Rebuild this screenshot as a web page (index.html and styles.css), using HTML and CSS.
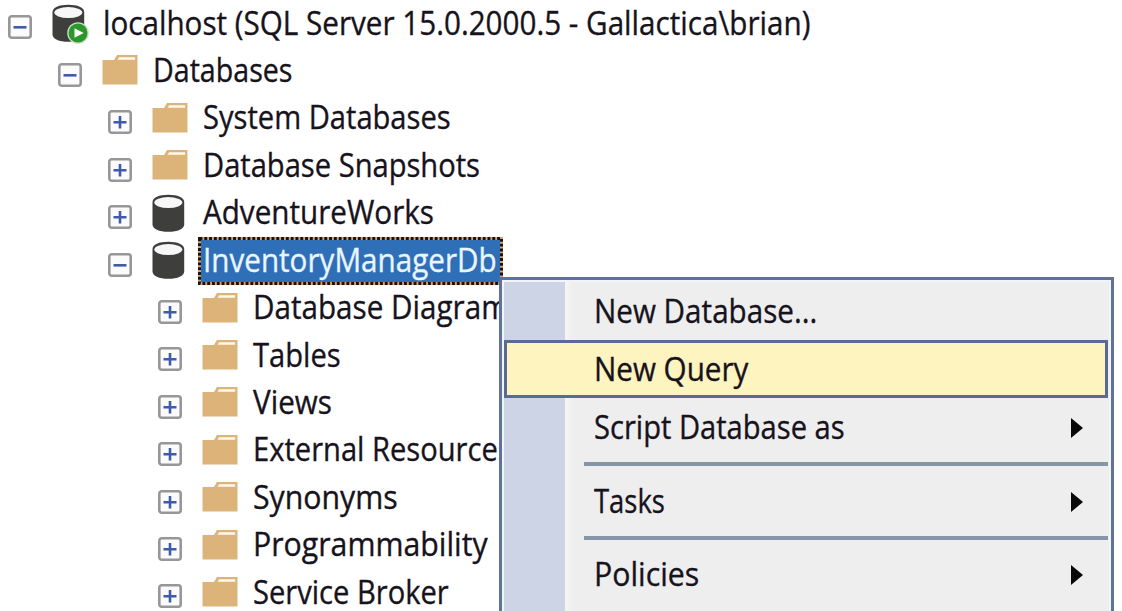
FILE: index.html
```html
<!DOCTYPE html>
<html lang="en">
<head>
<meta charset="utf-8">
<title>Object Explorer</title>
<link rel="stylesheet" href="styles.css">
</head>
<body>
<svg class="defs" aria-hidden="true">
  <symbol id="minus" viewBox="0 0 24 24"><rect x="1.3" y="1.3" width="21.4" height="21.4" rx="2.5" fill="#fbfbfb" stroke="#979797" stroke-width="2.6"/><path d="M5.5 12.3h13" stroke="#3f5ba9" stroke-width="2.6"/></symbol>
  <symbol id="plus" viewBox="0 0 24 24"><rect x="1.3" y="1.3" width="21.4" height="21.4" rx="2.5" fill="#fbfbfb" stroke="#979797" stroke-width="2.6"/><path d="M5.5 12.3h13M12 6v12.6" stroke="#3f5ba9" stroke-width="2.6"/></symbol>
  <symbol id="folder" viewBox="0 0 36 48"><path d="M.5 13h11.5L15 8h20.5v29.5H.5z" fill="#dcb378"/><path d="M15.5 12.8l1.6-2.5h16v2.5z" fill="#fff8ec"/></symbol>
  <symbol id="db" viewBox="0 0 36 48"><path d="M.5 12C.5 7.500 7 4.700 16.300 4.700S32.200 7.500 32.200 12v22.500c0 4.500-6.500 7.300-15.900 7.300S.5 39 .5 34.500z" fill="#3e3e3c"/><ellipse cx="16.300" cy="12.600" rx="14" ry="5.500" fill="#f7f7f7"/></symbol>
</svg>
<main class="explorer">
  <div class="row l0"><svg class="toggle"><use href="#minus"/></svg><span class="icon"><svg class="glyph"><use href="#db"/></svg><svg class="badge" viewBox="0 0 22 22"><circle cx="11" cy="11" r="10.800" fill="#c9dcc6"/><circle cx="11" cy="11" r="9.500" fill="#2b982b"/><path d="M7.500 6.300l9.200 4.700-9.200 4.700z" fill="#fff"/></svg></span><span class="label wide">localhost (SQL Server 15.0.2000.5 - Gallactica\brian)</span></div>
  <div class="row l1"><svg class="toggle"><use href="#minus"/></svg><svg class="icon"><use href="#folder"/></svg><span class="label narrow">Databases</span></div>
  <div class="row l2"><svg class="toggle"><use href="#plus"/></svg><svg class="icon"><use href="#folder"/></svg><span class="label">System Databases</span></div>
  <div class="row l2"><svg class="toggle"><use href="#plus"/></svg><svg class="icon"><use href="#folder"/></svg><span class="label">Database Snapshots</span></div>
  <div class="row l2"><svg class="toggle"><use href="#plus"/></svg><svg class="icon"><use href="#db"/></svg><span class="label wide">AdventureWorks</span></div>
  <div class="row l2"><svg class="toggle"><use href="#minus"/></svg><svg class="icon"><use href="#db"/></svg><span class="selection"><svg class="focus"><rect class="ring" x="1.500" y="1.500" width="302" height="45"/><rect class="dots" x="1.500" y="1.500" width="302" height="45"/></svg><span class="label wide">InventoryManagerDb</span></span></div>
  <div class="row l3"><svg class="toggle"><use href="#plus"/></svg><svg class="icon"><use href="#folder"/></svg><span class="label wide">Database Diagrams</span></div>
  <div class="row l3"><svg class="toggle"><use href="#plus"/></svg><svg class="icon"><use href="#folder"/></svg><span class="label">Tables</span></div>
  <div class="row l3"><svg class="toggle"><use href="#plus"/></svg><svg class="icon"><use href="#folder"/></svg><span class="label wide">Views</span></div>
  <div class="row l3"><svg class="toggle"><use href="#plus"/></svg><svg class="icon"><use href="#folder"/></svg><span class="label">External Resources</span></div>
  <div class="row l3"><svg class="toggle"><use href="#plus"/></svg><svg class="icon"><use href="#folder"/></svg><span class="label wider">Synonyms</span></div>
  <div class="row l3"><svg class="toggle"><use href="#plus"/></svg><svg class="icon"><use href="#folder"/></svg><span class="label wider">Programmability</span></div>
  <div class="row l3"><svg class="toggle"><use href="#plus"/></svg><svg class="icon"><use href="#folder"/></svg><span class="label">Service Broker</span></div>
</main>
<nav class="menu">
  <div class="item"><span class="label wide">New Database...</span></div>
  <div class="item active"><span class="label wide">New Query</span></div>
  <div class="item"><span class="label">Script Database as</span><svg class="arrow" viewBox="0 0 12 20"><path d="M0 0l12 10L0 20z"/></svg></div>
  <div class="separator"></div>
  <div class="item"><span class="label narrowest">Tasks</span><svg class="arrow" viewBox="0 0 12 20"><path d="M0 0l12 10L0 20z"/></svg></div>
  <div class="separator"></div>
  <div class="item"><span class="label wider">Policies</span><svg class="arrow" viewBox="0 0 12 20"><path d="M0 0l12 10L0 20z"/></svg></div>
</nav>
</body>
</html>
```
FILE: styles.css
```css
* { box-sizing: border-box; }
body { margin: 0; width: 1122px; height: 611px; overflow: hidden; position: relative; background: #fff; color: #17131c; font: 32px/38px "Open Sans", "Noto Sans", sans-serif; -webkit-text-stroke: .35px currentColor; }
.defs { display: none; }
.explorer { height: 611px; overflow: hidden; }
.row { display: flex; height: 47.43px; }
.l0 { padding-left: 8px; }
.l1 { padding-left: 58px; }
.l2 { padding-left: 108px; }
.l3 { padding-left: 158px; }
.toggle { flex: none; width: 24px; height: 24px; margin: 15.4px 20px 0 0; }
.icon { flex: none; position: relative; width: 36px; height: 48px; margin-right: 15px; }
.glyph { width: 36px; height: 48px; display: block; }
.badge { position: absolute; left: 15px; top: 22px; width: 22px; height: 22px; }
.label { --stretch: .91; height: 38px; margin-top: 3.6px; white-space: nowrap; transform: scaleX(var(--stretch)); transform-origin: 0 50%; }
.narrowest { --stretch: .857; }
.narrow { --stretch: .894; }
.wide { --stretch: .926; }
.wider { --stretch: .946; }
.selection { position: relative; flex: none; width: 305px; height: 48px; margin-left: -5px; padding-left: 5px; background: #2f6fb7; color: #e9f5ff; }
.selection .label { display: block; width: 300px; }
.focus { position: absolute; left: 0; top: 0; width: 305px; height: 48px; fill: none; stroke-width: 3; }
.ring { stroke: #e0a060; }
.dots { stroke: #16121a; stroke-dasharray: 2.900 1.900; }
.menu { position: absolute; left: 499px; top: 277px; width: 615px; height: 345px; padding: 1.500px 3px 0 2px; border: 3px solid #61729a; background: linear-gradient(90deg, #cdd4e6 62.500px, #f4f6f4 63.500px, #f0f1f0 68px, #eee 70px); box-shadow: inset 0 0 0 2px #f1f4fd; }
.item { display: flex; align-items: center; height: 58.200px; padding: 0 25px 0 90px; }
.item .label { flex: 1; margin: 0; }
.active { background: #fdf4bf; outline: 3px solid #596b93; outline-offset: -3px; }
.arrow { flex: none; width: 12px; height: 20px; margin-top: 2px; fill: #080808; }
.separator { height: 15.500px; padding: 6px 0 0 80px; }
.separator::before { content: ""; display: block; height: 4px; background: #8795a9; }
```
